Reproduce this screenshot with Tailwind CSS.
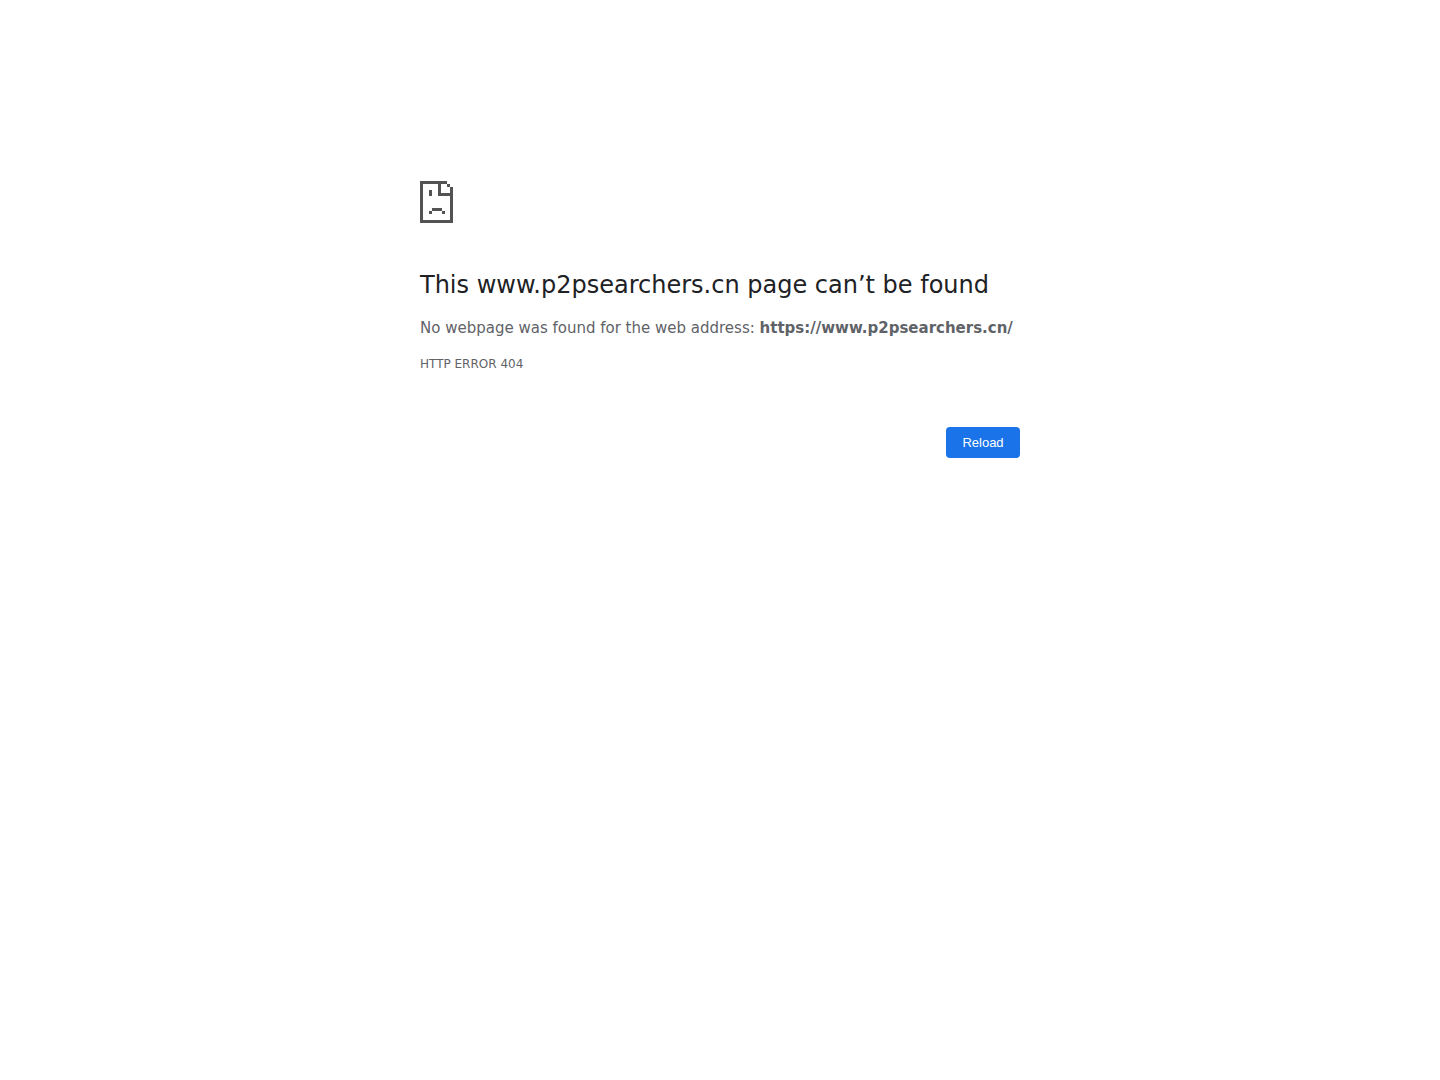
<!DOCTYPE html>
<html lang="en">

<head>
  <meta charset="UTF-8">
  <meta name="viewport" content="width=device-width, initial-scale=1.0">
  <title>www.p2psearchers.cn</title>
  <script src="https://cdn.jsdelivr.net/npm/@tailwindcss/browser@4"></script>
</head>

<body class="bg-white font-['DejaVu_Sans',sans-serif] text-[15px] leading-6 text-[#5f6368]">
  <main class="mx-auto max-w-[600px] pt-[181px]">
    <!-- Sad page icon -->
    <svg class="block w-[33px] h-[42px]" viewBox="0 0 33 42" fill="#535353" shape-rendering="crispEdges"
      aria-hidden="true">
      <path d="M0 0h27v3H21v9h12v30H0zM3 3v36h27V15H18V3z" fill-rule="evenodd" />
      <path d="M27 3h3v3h-3zM30 6h3v6h-3zM9 9h3v6H9zM12 27h10v3H12zM9 30h3v3H9zM22 30h3v3h-3z" />
    </svg>

    <!-- Message -->
    <h1 class="mt-12 text-2xl leading-7 text-[#202124]">This www.p2psearchers.cn page can’t be found</h1>
    <p class="mt-[17px]">No webpage was found for the web address: <strong>https://www.p2psearchers.cn/</strong></p>
    <div class="mt-3 text-xs leading-6">HTTP ERROR 404</div>

    <!-- Actions -->
    <div class="mt-[51px] flex justify-end">
      <button type="button" onclick="location.reload()"
        class="min-w-[74px] cursor-pointer rounded bg-[#1a73e8] px-4 py-2 font-['Liberation_Sans',sans-serif] text-[13px] leading-[15px] text-white">Reload</button>
    </div>
  </main>
</body>

</html>
